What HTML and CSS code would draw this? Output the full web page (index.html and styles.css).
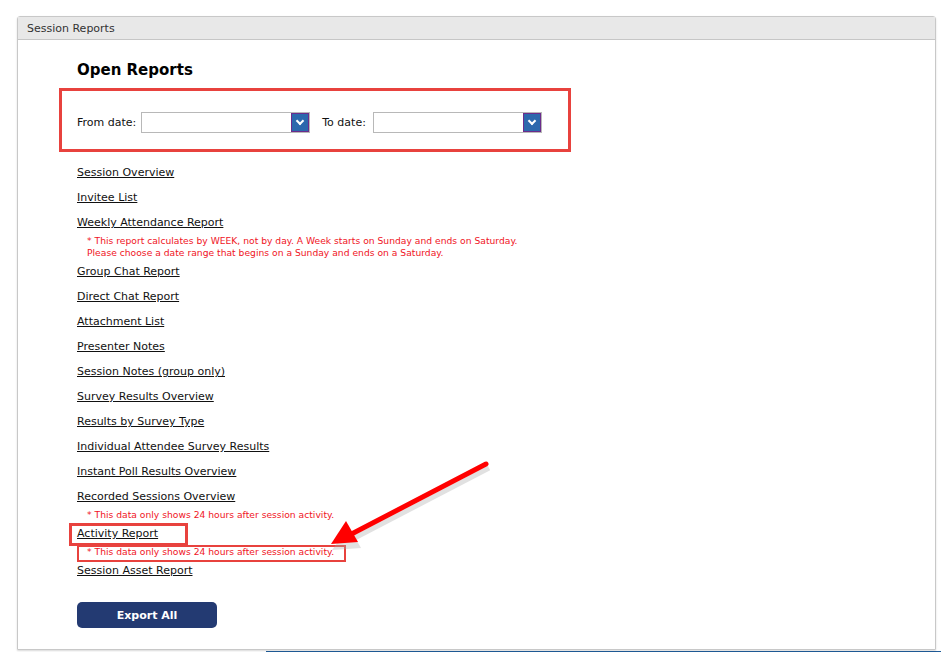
FILE: index.html
```html
<!DOCTYPE html>
<html lang="en">
<head>
    <meta charset="UTF-8">
    <title>Session Reports</title>
    <link rel="stylesheet" href="styles.css">
</head>
<body>
    <div class="panel">
        <div class="panel-header">Session Reports</div>
        <div class="panel-body">
            <h2>Open Reports</h2>

            <div class="date-row">
                <label>From date:</label>
                <div class="date-select"><span class="drop-btn"></span></div>
                <label class="to-label">To date:</label>
                <div class="date-select"><span class="drop-btn"></span></div>
            </div>

            <ul class="report-list">
                <li><a href="#">Session Overview</a></li>
                <li><a href="#">Invitee List</a></li>
                <li><a href="#">Weekly Attendance Report</a></li>
                <li class="note">* This report calculates by WEEK, not by day. A Week starts on Sunday and ends on Saturday.<br>Please choose a date range that begins on a Sunday and ends on a Saturday.</li>
                <li><a href="#">Group Chat Report</a></li>
                <li><a href="#">Direct Chat Report</a></li>
                <li><a href="#">Attachment List</a></li>
                <li><a href="#">Presenter Notes</a></li>
                <li><a href="#">Session Notes (group only)</a></li>
                <li><a href="#">Survey Results Overview</a></li>
                <li><a href="#">Results by Survey Type</a></li>
                <li><a href="#">Individual Attendee Survey Results</a></li>
                <li><a href="#">Instant Poll Results Overview</a></li>
                <li><a href="#">Recorded Sessions Overview</a></li>
                <li class="note">* This data only shows 24 hours after session activity.</li>
                <li><a href="#">Activity Report</a></li>
                <li class="note">* This data only shows 24 hours after session activity.</li>
                <li><a href="#">Session Asset Report</a></li>
            </ul>

            <button class="export-btn">Export All</button>
        </div>

        <!-- screenshot annotations -->
        <div class="mark mark-dates"></div>
        <div class="mark mark-activity"></div>
        <div class="mark mark-note"></div>
        <svg class="arrow" width="200" height="120" viewBox="0 0 200 120">
            <g transform="translate(3,4)" fill="#aaa" opacity="0.35">
                <line x1="186" y1="23" x2="40" y2="99" stroke="#aaa" stroke-width="5"/>
                <polygon points="29,105 46,82 58,103"/>
            </g>
            <line x1="186" y1="23" x2="40" y2="99" stroke="#f00" stroke-width="5" stroke-linecap="round"/>
            <polygon points="31,103 46,80 58,101" fill="#f00"/>
        </svg>
    </div>
    <div class="bottom-bar"></div>
</body>
</html>
```

FILE: styles.css
```css
/* Page */
body {
    margin: 0;
    background: #fff;
    font-family: "DejaVu Sans", Tahoma, sans-serif;
    font-size: 11px;
    color: #111;
}

.panel {
    position: relative;
    margin: 16px 0 0 17px;
    width: 917px;
    border: 1px solid #c8c8c8;
    border-radius: 3px 3px 0 0;
    box-shadow: 0 1px 2px rgba(0, 0, 0, 0.15);
}

.panel-header {
    height: 22px;
    line-height: 23px;
    padding-left: 9px;
    background: #e8e8e8;
    border-bottom: 1px solid #c6c6c6;
    color: #333;
    font-size: 11px;
}

.panel-body {
    padding: 20px 0 21px 59px;
}

h2 {
    margin: 0 0 10px 0;
    font-size: 15px;
    font-weight: bold;
    color: #000;
    line-height: 20px;
}

/* Date pickers */
.date-row {
    display: flex;
    align-items: center;
    height: 21px;
    padding: 22px 0 27px 0;
}

.date-row label {
    margin-right: 5px;
}

.date-row .to-label {
    margin-left: 12px;
    margin-right: 7px;
}

.date-select {
    position: relative;
    width: 167px;
    height: 19px;
    border: 1px solid #b8b8b8;
    background: #fff;
}

.drop-btn {
    position: absolute;
    top: 0;
    right: 0;
    width: 16px;
    height: 17px;
    background: #2c68ad;
    border: 1px solid #6b2c8c;
}

.drop-btn::after {
    content: "";
    position: absolute;
    left: 5px;
    top: 4px;
    width: 4px;
    height: 4px;
    border-right: 2px solid #fff;
    border-bottom: 2px solid #fff;
    transform: rotate(45deg);
}

/* Report links */
.report-list {
    list-style: none;
    margin: 0;
    padding: 0;
}

.report-list li {
    line-height: 25px;
}

.report-list a {
    color: #111;
    text-decoration: underline;
}

.report-list .note {
    line-height: 12px;
    padding-left: 10px;
    color: #f0141e;
    font-size: 9.2px;
}

.export-btn {
    display: block;
    margin-top: 19px;
    width: 140px;
    height: 26px;
    border: none;
    border-radius: 5px;
    background: #233a72;
    color: #fff;
    font-family: "DejaVu Sans", Tahoma, sans-serif;
    font-size: 11px;
    font-weight: bold;
    cursor: pointer;
}

/* Red annotation boxes */
.mark {
    position: absolute;
    border: 3px solid #e8423e;
}

.mark-dates {
    left: 41px;
    top: 71px;
    width: 506px;
    height: 58px;
}

.mark-activity {
    left: 51px;
    top: 506px;
    width: 113px;
    height: 17px;
}

.mark-note {
    left: 59px;
    top: 528px;
    width: 265px;
    height: 13px;
    border-width: 2px;
}

.arrow {
    position: absolute;
    left: 282px;
    top: 424px;
}

.bottom-bar {
    margin: 1px 0 0 266px;
    height: 2px;
    background: #1f5c99;
}
```
